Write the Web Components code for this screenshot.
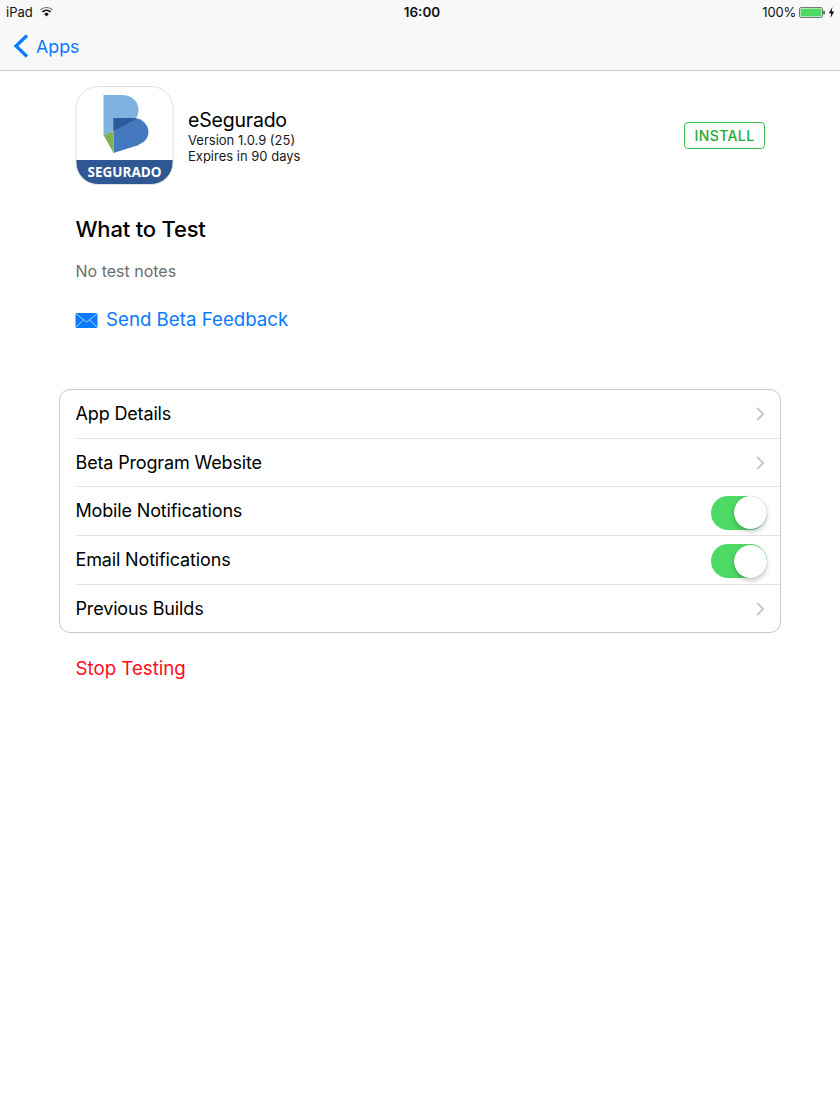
<!DOCTYPE html>
<html>
<head>
<meta charset="utf-8">
<title>eSegurado</title>
<style>
  html, body { margin: 0; background: #fff; }
  body { width: 840px; height: 1120px; overflow: hidden; font-family: Inter, "Liberation Sans", sans-serif; color: #000; }
</style>
</head>
<body>
<ios-nav></ios-nav>
<app-header></app-header>
<test-notes></test-notes>
<settings-card>
  <settings-row label="App Details" kind="chevron"></settings-row>
  <settings-row label="Beta Program Website" kind="chevron"></settings-row>
  <settings-row label="Mobile Notifications" kind="toggle"></settings-row>
  <settings-row label="Email Notifications" kind="toggle"></settings-row>
  <settings-row label="Previous Builds" kind="chevron" last></settings-row>
</settings-card>
<stop-link></stop-link>

<script>
// small helper so every element is set up the same way
function shadow(el, html) {
  el.attachShadow({ mode: 'open' }).innerHTML = html;
}

customElements.define('ios-nav', class extends HTMLElement {
  connectedCallback() {
    shadow(this, `
      <style>
        :host { display: block; height: 70px; background: #f8f8f8; border-bottom: 1px solid #c9c9c9; }
        .status { height: 24px; display: grid; grid-template-columns: 1fr auto 1fr; align-items: center; padding: 0 5px 0 6px; font-size: 13px; color: #111; }
        .left { display: flex; align-items: center; gap: 7px; }
        .time { font-weight: 600; font-size: 13.500px; margin-left: 3px; }
        .right { display: flex; align-items: center; justify-content: flex-end; gap: 3px; }
        .right span { letter-spacing: -.2px; }
        .back { display: flex; align-items: center; gap: 9px; padding: 10px 0 0 13px; color: #0a7aff; font-size: 17.800px; }
        .back span { margin-left: -2px; }
        svg { display: block; }
      </style>
      <div class="status">
        <div class="left">
          <span>iPad</span>
          <svg width="13" height="10" viewBox="0 0 13 10">
            <path d="M.5 3a8.500 8.500 0 0 1 12 0" fill="none" stroke="#777" stroke-width="1.100"/>
            <path d="M2.400 5a5.600 5.600 0 0 1 8.200 0" fill="none" stroke="#111" stroke-width="1.500"/>
            <path d="M4.200 7a3.200 3.200 0 0 1 4.600 0L6.500 9.500z" fill="#111"/>
          </svg>
        </div>
        <div class="time">16:00</div>
        <div class="right">
          <span>100%</span>
          <svg width="26" height="11" viewBox="0 0 26 11">
            <rect x=".5" y=".5" width="23" height="10" rx="1.600" fill="#fff" stroke="#777"/>
            <rect x="1.500" y="1.500" width="21" height="8" rx=".8" fill="#4cd964"/>
            <rect x="24.300" y="3.800" width="1.400" height="3.400" fill="#333"/>
          </svg>
          <svg width="7" height="11" viewBox="0 0 7 11"><path d="M4.400 0 .8 6.200h2.400L2.500 11l3.700-6.400H3.700z" fill="#111"/></svg>
        </div>
      </div>
      <div class="back">
        <svg width="16" height="24" viewBox="0 0 16 24"><path d="M14 1.500 3 12l11 10.500" fill="none" stroke="#0a7aff" stroke-width="3.200"/></svg>
        <span>Apps</span>
      </div>`);
  }
});

customElements.define('app-header', class extends HTMLElement {
  connectedCallback() {
    shadow(this, `
      <style>
        :host { display: flex; align-items: center; padding: 15px 75px 0 75px; }
        .icon { width: 99px; height: 99px; display: block; flex: none; }
        .info { flex: 1; margin-left: 14px; }
        h1 { margin: 1px 0 0; font-size: 19.500px; font-weight: 400; line-height: 24px; letter-spacing: -.2px; }
        p { margin: 0; font-size: 13px; line-height: 16px; color: #1a1a1a; }
        .install { width: 81px; height: 27px; box-sizing: border-box; border: 1px solid #3fbf50; border-radius: 4px; color: #1eaa34;
          font-size: 14px; font-weight: 500; letter-spacing: .4px; display: flex; align-items: center; justify-content: center; margin-top: -1px; }
        .word { font-family: "Open Sans", sans-serif; font-size: 13.500px; font-weight: 700; fill: #fff; }
      </style>
      <svg class="icon" viewBox="0 0 98 99">
        <defs><clipPath id="c"><rect x=".5" y=".5" width="97" height="98" rx="22"/></clipPath></defs>
        <g clip-path="url(#c)">
          <rect width="98" height="99" fill="#fff"/>
          <path d="M28 9H46C56 9 63 15 63 24C63 28 62 30 60 33L38 45 28 49Z" fill="#81b3e0"/>
          <path d="M38 32H57C68 32 73 40 73 46C73 54 66 58 60 60L38 67Z" fill="#4579bf"/>
          <path d="M38 32H60.500C60 33 59 34 58 34.500L38 45Z" fill="#2f5a9e"/>
          <path d="M28 49 38 45V67Z" fill="#7fb257"/>
          <rect y="74" width="98" height="25" fill="#2f5793"/>
          <text class="word" x="49" y="91" text-anchor="middle">SEGURADO</text>
        </g>
        <rect x=".5" y=".5" width="97" height="98" rx="22" fill="none" stroke="#dfdfdf"/>
      </svg>
      <div class="info">
        <h1>eSegurado</h1>
        <p>Version 1.0.9 (25)</p>
        <p>Expires in 90 days</p>
      </div>
      <div class="install">INSTALL</div>`);
  }
});

customElements.define('test-notes', class extends HTMLElement {
  connectedCallback() {
    shadow(this, `
      <style>
        :host { display: block; padding: 30px 76px 0 75.500px; }
        h2 { margin: 0; font-size: 22px; font-weight: 500; line-height: 28px; letter-spacing: -.2px; }
        .none { margin-top: 18px; font-size: 16px; line-height: 20px; color: #6d6d6d; }
        .send { display: flex; align-items: center; gap: 8px; margin-top: 26px; color: #0a7aff; font-size: 18.700px; line-height: 26px; height: 26px; }
        svg { display: block; margin-left: -.5px; }
      </style>
      <h2>What to Test</h2>
      <div class="none">No test notes</div>
      <div class="send">
        <svg width="23" height="15" viewBox="0 0 22 15">
          <rect width="22" height="15" rx="1" fill="#0a7aff"/>
          <path d="M.5.800 11 9 21.500.800M.5 14.200 8 6.800M21.500 14.200 14 6.800" fill="none" stroke="#cfe5ff" stroke-width=".8"/>
        </svg>
        <span>Send Beta Feedback</span>
      </div>`);
  }
});

customElements.define('settings-card', class extends HTMLElement {
  connectedCallback() {
    shadow(this, `
      <style>
        :host { display: block; box-sizing: border-box; width: 722px; margin: 56px 0 0 59px; border: 1px solid #c8c8c8; border-radius: 11px; background: #fff; }
      </style>
      <slot></slot>`);
  }
});

customElements.define('settings-row', class extends HTMLElement {
  connectedCallback() {
    const kind = this.getAttribute('kind');
    const chevron = `<svg class="chev" width="9" height="14" viewBox="0 0 9 14"><path d="M1.200 1 7.200 7l-6 6" fill="none" stroke="#c7c7cc" stroke-width="2"/></svg>`;
    const toggle = `<div class="toggle"><div class="knob"></div></div>`;
    shadow(this, `
      <style>
        :host { display: block; margin-left: 15.500px; height: 48.700px; box-sizing: border-box; border-bottom: 1px solid #e4e4e4; }
        :host([last]) { border-bottom: 0; height: 47.500px; }
        .row { height: 100%; display: flex; align-items: center; justify-content: space-between; font-size: 18px; letter-spacing: -.15px; }
        .label { margin-top: -1px; }
        .chev { display: block; margin-right: 15px; }
        .toggle { position: relative; width: 56px; height: 34px; margin: 3px 13px 0 0; border-radius: 17px; background: #4cd964; }
        .knob { position: absolute; right: 0; top: .5px; width: 33px; height: 33px; border-radius: 50%; background: #fff;
          box-shadow: 0 3px 5px rgba(0,0,0,.2), 0 0 1px rgba(0,0,0,.25); }
      </style>
      <div class="row">
        <span class="label">${this.getAttribute('label')}</span>
        ${kind === 'toggle' ? toggle : chevron}
      </div>`);
  }
});

customElements.define('stop-link', class extends HTMLElement {
  connectedCallback() {
    shadow(this, `
      <style>
        :host { display: block; padding: 23px 0 0 75.500px; color: #fc0d1b; font-size: 18.700px; line-height: 26px; }
      </style>
      Stop Testing`);
  }
});
</script>
</body>
</html>
